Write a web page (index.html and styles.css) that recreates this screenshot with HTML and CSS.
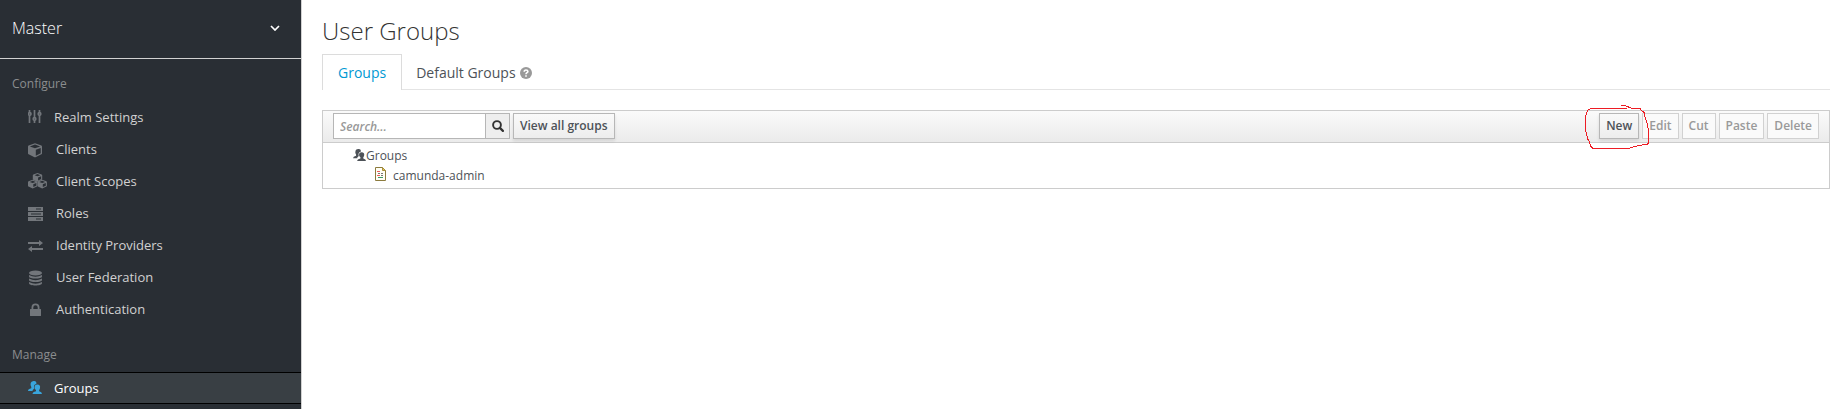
FILE: index.html
```html
<!DOCTYPE html>
<html lang="en">
<head>
<meta charset="utf-8">
<title>User Groups</title>
<link rel="stylesheet" href="styles.css">
</head>
<body>
<div class="app">
  <aside class="sidebar">
    <button class="realm" type="button">
      <span>Master</span>
      <svg width="10" height="6" viewBox="0 0 10 6"><path d="M1 1l4 4 4-4" fill="none" stroke="currentColor" stroke-width="1.7"/></svg>
    </button>
    <nav class="nav">
      <h2 class="nav-title">Configure</h2>
      <ul class="nav-list">
        <li><a class="nav-link nav-link-narrow" href="#"><svg class="icon" viewBox="0 0 16 16"><g fill="none" stroke="currentColor" stroke-width="1.7"><path d="M1.500 1v2M1.500 7v7M6.500 1v7M6.500 12v2M11.500 1v2M11.500 7v7"/><circle cx="1.700" cy="5" r="1.300"/><circle cx="6.500" cy="10" r="1.300"/><circle cx="11.500" cy="5" r="1.300"/></g></svg><span>Realm Settings</span></a></li>
        <li><a class="nav-link" href="#"><svg class="icon icon-low" viewBox="0 0 16 16"><path fill="currentColor" fill-rule="evenodd" d="M7 1.200L.6 3.500Q0 3.800 0 4.500V11.500Q0 12 .6 12.300L6.500 15.200Q7 15.400 7.500 15.200L13.400 12.300Q14 12 14 11.500V4.500Q14 3.800 13.400 3.500ZM7 2.500L12.200 4.400 7 6.300 1.800 4.400ZM7.800 7.700L12.700 5.900V11.300L7.800 13.700Z"/></svg><span>Clients</span></a></li>
        <li><a class="nav-link" href="#"><svg class="icon icon-wide" viewBox="0 0 19 16"><defs><path id="box" fill="currentColor" fill-rule="evenodd" d="M4.700 0L.5 1.600 0 2.300V6.200L.4 6.800 4.700 8.800 9 6.800 9.400 6.200V2.300L8.900 1.600ZM4.700 1.100L7.600 2.200 4.700 3.300 1.800 2.200ZM5.300 4.500L8.300 3.300V6L5.300 7.400Z"/></defs><use href="#box" x="4.800" y="0"/><use href="#box" x="0" y="6.700"/><use href="#box" x="9.500" y="6.700"/></svg><span>Client Scopes</span></a></li>
        <li><a class="nav-link" href="#"><svg class="icon icon-low" viewBox="0 0 16 16"><path fill="currentColor" fill-rule="evenodd" d="M0 1h15v4H0ZM0 6h15v4H0ZM0 11h15v4H0ZM8 2.500h5v1H8ZM3 7.500h10v1H3ZM8 12.500h5v1H8Z"/></svg><span>Roles</span></a></li>
        <li><a class="nav-link" href="#"><svg class="icon icon-low" viewBox="0 0 16 16"><path fill="currentColor" d="M0 4h11V2l4 3-4 3V6H0ZM15 10H4V8L0 11l4 3v-2h11Z"/></svg><span>Identity Providers</span></a></li>
        <li><a class="nav-link" href="#"><svg class="icon icon-low" viewBox="0 0 16 16"><g fill="currentColor"><ellipse cx="7.500" cy="3" rx="6.500" ry="2.500"/><path d="M1 5q6.500 3.400 13 0v1.500c0 2.800-13 2.800-13 0ZM1 8.500q6.500 3.400 13 0V10c0 2.800-13 2.800-13 0ZM1 12q6.500 3.400 13 0v1.200c0 3-13 3-13 0Z"/></g></svg><span>User Federation</span></a></li>
        <li><a class="nav-link" href="#"><svg class="icon icon-low" viewBox="0 0 16 16"><path fill="currentColor" fill-rule="evenodd" d="M2.500 7H3.500V5.500a4 4 0 0 1 8 0V7h1q.5 0 .5.500v6q0 .5-.5.500h-10q-.5 0-.5-.500v-6Q2 7 2.500 7ZM5.300 7h4.400V5.500a2.200 2.200 0 0 0-4.400 0Z"/></svg><span>Authentication</span></a></li>
      </ul>
      <h2 class="nav-title">Manage</h2>
      <ul class="nav-list nav-list-manage">
        <li><a class="nav-link nav-link-narrow active" href="#" aria-current="page"><svg class="icon" viewBox="0 0 16 16"><g fill="currentColor"><path id="person-back" d="M5.500 1C8 .7 8.800 2.300 8.300 4 6 4.300 5.600 6.500 6.200 8.500L4.600 10.200V11H0q0-2 3.300-2.700V7Q2 5.500 2.700 3q.4-1.700 2.800-2Z"/><path id="person-front" d="M9.200 4.500c2.400 0 3.300 1.500 2.800 3.500q-.2 1.300-.9 2v1.200Q14 12 14 14H4.500q0-2 3.500-2.800V10Q6.500 9 6.500 7.500q0-3 2.700-3Z"/></g></svg><span>Groups</span></a></li>
      </ul>
    </nav>
  </aside>
  <main class="main">
    <h1 class="page-title">User Groups</h1>
    <nav class="tabs">
      <a class="tab tab-active" href="#">Groups</a>
      <a class="tab" href="#">Default Groups <svg class="help" viewBox="0 0 12 12"><circle cx="6" cy="6" r="6" fill="#999"/><path d="M4.200 4.800Q4.200 3 6 3t1.900 1.500C7.900 5.700 6 5.700 6 7.200M6 8.200v1.500" fill="none" stroke="#fff" stroke-width="1.600"/></svg></a>
    </nav>
    <section class="panel">
      <div class="toolbar">
        <form class="search">
          <input class="search-input" type="text" placeholder="Search..." aria-label="Search groups">
          <button class="search-button" type="button" aria-label="Search"><svg width="12" height="12" viewBox="0 0 12 12" fill="none" stroke="currentColor"><circle cx="5" cy="5" r="3.900" stroke-width="1.900"/><path d="M7.900 7.900l3 3" stroke-width="2.200" stroke-linecap="round"/></svg></button>
        </form>
        <button class="btn" type="button">View all groups</button>
        <div class="actions">
          <div class="marked">
            <button class="btn" type="button">New</button>
            <svg class="mark" viewBox="42 42 198 138" fill="none" stroke="#ed1c24" stroke-width="3" shape-rendering="crispEdges"><path d="M153 46l12 1 13 5 7 3h25l5 7 7 5v12l5 4 2 14 3 4 2 12v13l2 3-1 11v19l-4 4h-10l-10 4-17 2-15 5H67l-5-5-3-12-6-10-3-15-3-11V78l3-11 5-8 8-4h108"/></svg>
          </div>
          <button class="btn" type="button" disabled>Edit</button>
          <button class="btn" type="button" disabled>Cut</button>
          <button class="btn" type="button" disabled>Paste</button>
          <button class="btn" type="button" disabled>Delete</button>
        </div>
      </div>
      <ul class="tree">
        <li>
          <div class="tree-row"><svg class="tree-users" viewBox="0 0 14 15"><g fill="currentColor"><use href="#person-back"/><use href="#person-front"/></g></svg><span>Groups</span></div>
          <ul class="tree-children">
            <li class="tree-row tree-leaf"><svg class="tree-file" width="11" height="14" viewBox="0 0 11 14"><path d="M.5.5h7l3 3v10H.5Z" fill="#fffef5" stroke="#8c7b3e"/><path d="M7.500.5v3h3Z" fill="#e0c35a" stroke="#a8903c"/><path d="M2 4.500h3M2 8.500h3" stroke="#ee5a5a"/><path d="M3 6.500h2M6 6.500h2M6 8.500h2" stroke="#777"/><path d="M3 10.500h5" stroke="#3a9a6a"/></svg><span>camunda-admin</span></li>
          </ul>
        </li>
      </ul>
    </section>
  </main>
</div>
</body>
</html>
```
FILE: styles.css
```css
* { box-sizing: border-box; }
body {
  margin: 0;
  background: #fff;
  color: #4d5258;
  font: 12px/20px "Open Sans", "Noto Sans", sans-serif;
}
button, input { font: inherit; color: inherit; margin: 0; }
a { color: inherit; text-decoration: none; }
ul { list-style: none; margin: 0; padding: 0; }
svg { display: block; flex: none; }

.app { display: flex; min-height: 100vh; }

.sidebar {
  flex: none;
  width: 302px;
  background: #292e34;
  border-right: 1px solid #d1d1d1;
}
.realm {
  display: flex;
  align-items: center;
  justify-content: space-between;
  width: 100%;
  height: 59px;
  padding: 0 21px 2px 12px;
  border: 0;
  border-bottom: 1px solid #d1d1d1;
  background: none;
  color: #fff;
  font-size: 16px;
  font-weight: 300;
}
.nav-title {
  margin: 0;
  padding: 15px 12px 7px;
  color: #8b8d8f;
  font-size: 12px;
  font-weight: 400;
  line-height: 20px;
}
.nav-list { padding-bottom: 5px; }
.nav-list-manage { padding: 0; }
.nav-link {
  display: flex;
  align-items: center;
  gap: 12px;
  height: 32px;
  padding-left: 28px;
  color: #d1d1d1;
  font-size: 13px;
}
.nav-link-narrow { gap: 10px; }
.icon { width: 16px; height: 16px; color: #72767b; }
.icon-low { margin-top: 2px; }
.icon-wide { width: 19px; margin-right: -3px; }
.active {
  background: #393f44;
  border: 1px solid #000;
  border-width: 1px 0;
  color: #fff;
}
.active .icon { color: #39a5dc; }

.main { flex: 1; min-width: 0; padding: 15px 9px 0 20px; }
.page-title {
  margin: 0;
  color: #333;
  font-size: 24px;
  font-weight: 300;
  line-height: 32px;
}
.tabs {
  display: flex;
  margin-top: 7px;
  border-bottom: 1px solid #e4e4e4;
  font-size: 14px;
}
.tab {
  display: flex;
  align-items: center;
  gap: 4px;
  height: 36px;
  margin-bottom: -1px;
  padding: 0 13px;
  border: 1px solid transparent;
  border-bottom: 0;
}
.tab-active {
  padding: 0 15px;
  background: #fff;
  border-color: #dcdcdc;
  color: #0099d3;
}
.help { width: 12px; height: 12px; }

.panel { margin-top: 20px; border: 1px solid #ccc; }
.toolbar {
  display: flex;
  align-items: flex-start;
  gap: 3px;
  height: 32px;
  padding: 2px 10px 0;
  border-bottom: 1px solid #ccc;
  background: linear-gradient(#fafafa, #ebebeb);
}
.search { display: flex; }
.search-input {
  width: 153px;
  height: 26px;
  padding: 0 6px;
  border: 1px solid #b6b6b6;
  background: #fff;
}
.search-input::placeholder { color: #999; font-style: italic; font-weight: 600; }
.search-button {
  display: flex;
  align-items: center;
  justify-content: center;
  width: 25px;
  height: 26px;
  margin-left: -1px;
  padding: 0;
  border: 1px solid #b6b6b6;
  background: #eee;
  color: #333;
}
.btn {
  height: 26px;
  padding: 0 6px;
  border: 1px solid #b7b7b7;
  background: linear-gradient(#fafafa, #ededed);
  box-shadow: 0 2px 3px rgba(3, 3, 3, .1);
  font-weight: 600;
  line-height: 20px;
}
.btn:disabled {
  border-color: #d1d1d1;
  background: #fafafa;
  box-shadow: none;
  color: #999;
}
.actions { display: flex; gap: 3px; margin-left: auto; }
.marked { position: relative; }
.mark {
  position: absolute;
  top: -9px;
  left: -15px;
  width: 66px;
  height: 46px;
  pointer-events: none;
}

.tree { padding: 3px 0 2px 30px; }
.tree-row { display: flex; align-items: center; height: 20px; }
.tree-users { width: 13px; height: 14px; margin-bottom: 2px; }
.tree-children { padding-left: 22px; }
.tree-leaf { gap: 7px; }
.tree-file { margin-bottom: 4px; }
```
